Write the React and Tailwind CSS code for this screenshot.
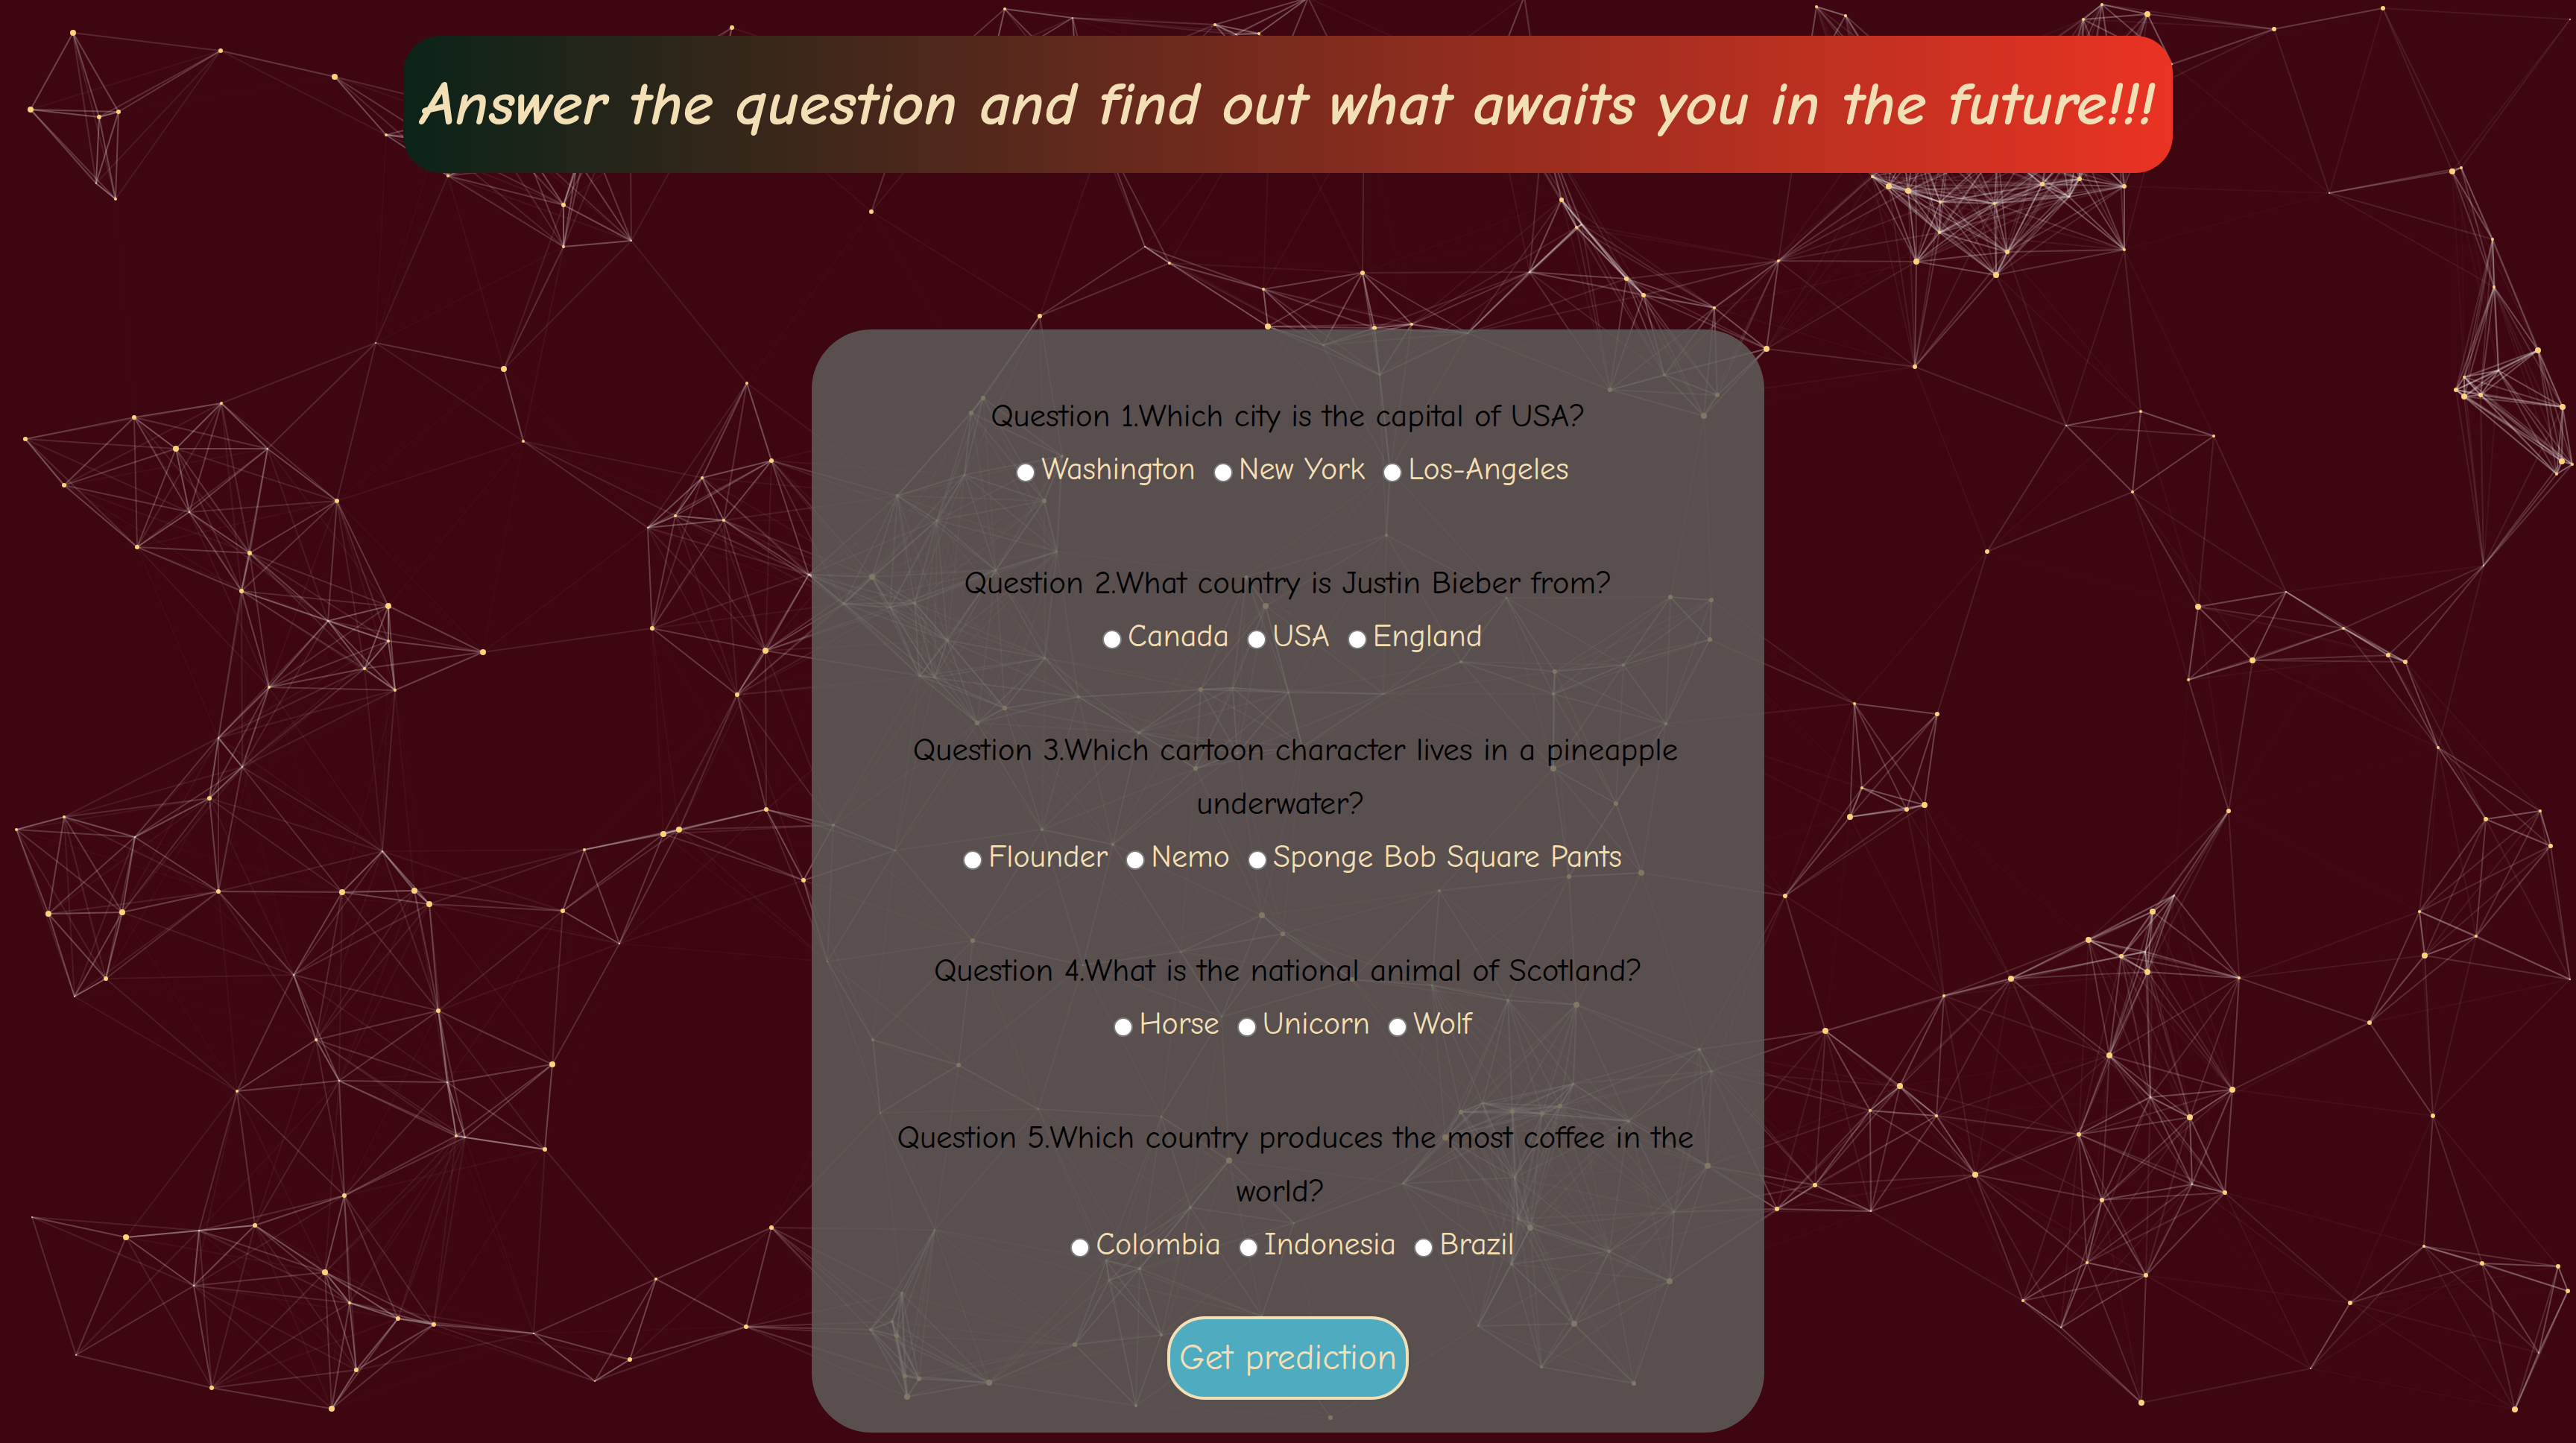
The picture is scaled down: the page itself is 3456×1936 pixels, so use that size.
import React from "react";

const QUESTIONS = [
  { lines: ["Question 1.Which city is the capital of USA?"], answers: ["Washington", "New York", "Los-Angeles"] },
  { lines: ["Question 2.What country is Justin Bieber from?"], answers: ["Canada", "USA", "England"] },
  {
    lines: ["Question 3.Which cartoon character lives in a pineapple", "underwater?"],
    answers: ["Flounder", "Nemo", "Sponge Bob Square Pants"],
  },
  { lines: ["Question 4.What is the national animal of Scotland?"], answers: ["Horse", "Unicorn", "Wolf"] },
  {
    lines: ["Question 5.Which country produces the most coffee in the", "world?"],
    answers: ["Colombia", "Indonesia", "Brazil"],
  },
];

/* Particle field: [x, y, radius]; neighbours closer than LINK_DISTANCE are joined. */
const LINK_DISTANCE = 300;
const PARTICLES = [
  [98,44,4],[296,68,3],[449,103,4],[41,147,4],[133,157,3],[159,150,3],[129,246,1],[155,267,2],[518,181,2],[601,236,2],
  [756,275,3],[756,331,2],[847,323,1],[982,37,3],[504,460,1],[676,495,4],[702,592,2],[297,541,2],[180,560,3],[34,589,3],
  [236,602,4],[359,602,1],[86,651,3],[254,687,1],[452,672,3],[184,734,3],[335,742,3],[324,793,3],[521,813,4],[440,833,1],
  [521,860,2],[489,897,2],[648,875,4],[1002,514,2],[1035,618,3],[942,641,2],[906,692,2],[971,698,2],[869,708,1],[1085,771,1],
  [875,843,3],[1027,873,4],
  [361,922,2],[530,926,2],[989,932,3],[293,990,1],[325,1029,1],[281,1071,3],[86,1096,2],[22,1113,2],[181,1123,1],[65,1226,4],
  [164,1224,4],[293,1196,3],[142,1313,3],[100,1337,1],[513,1142,1],[459,1197,4],[556,1195,4],[576,1213,4],[394,1308,1],
  [424,1395,2],[588,1356,3],[455,1450,1],[600,1452,1],[318,1464,2],[741,1428,4],[612,1524,2],[624,1526,1],[731,1542,3],
  [462,1604,3],[784,1140,2],[755,1222,3],[831,1266,1],[890,1119,4],[911,1113,4],[1028,1086,3],[1078,1181,3],[43,1633,1],
  [169,1660,4],[267,1651,1],[342,1644,3],[260,1725,1],[436,1707,4],[469,1748,2],[534,1769,3],[582,1777,3],[102,1818,1],
  [284,1862,3],[478,1838,3],[445,1890,4],[716,1789,1],[798,1853,1],[845,1824,3],[880,1716,2],[1001,1780,3],[1035,1647,3],
  [1348,12,2],[1439,24,1],[1630,33,2],[1689,45,2],[1658,46,1],[1169,284,3],[1536,331,1],[1569,353,2],[1395,424,3],
  [1695,388,2],[1701,438,4],[1755,-3,1],[2045,-5,1],
  [1828,366,3],[1844,440,3],[1894,435,2],[2095,268,3],[2122,301,1],[2115,305,2],[2052,365,1],[2182,374,3],[2205,396,3],
  [2300,413,2],[2386,350,2],[2571,351,4],[2678,369,4],[2693,338,3],[2850,335,2],[2602,312,2],[2603,271,2],[2676,273,2],
  [2776,264,1],[2740,247,3],[2790,240,3],[2850,250,3],[2560,256,4],[2534,250,4],[2512,237,2],[2437,9,2],[2476,21,2],
  [2820,6,2],[2881,19,4],[2795,26,2],[2914,86,1],[1969,447,1],
  [3051,39,3],[3197,11,3],[3448,26,1],[3125,259,1],[3290,230,4],[3302,225,2],[3344,321,2],[3346,385,2],[3405,470,4],
  [3352,497,1],[3306,506,2],[3295,523,3],[3306,532,4],[3328,530,3],[3438,546,4],[3437,619,4],[3451,623,2],[3430,636,2],
  [3332,759,1],[2370,468,4],[2569,492,3],[2772,571,1],[2872,552,2],[2970,585,2],[2861,660,2],[2666,740,3],[2949,814,4],
  [3067,794,1],[3144,843,2],[3022,886,4],[3204,879,3],[3227,888,3],[2936,912,2],
  [2488,944,2],[2599,958,3],[2498,1057,2],[2482,1096,4],[2558,1086,3],[2582,1080,4],[2395,1202,3],[2990,1088,3],
  [3271,1003,2],[3335,1099,3],[3408,1088,2],[3422,1135,3],[3246,1223,2],[3322,1256,2],[3253,1282,4],[3448,1314,1],
  [3179,1372,3],[3264,1497,3],[2917,1201,1],[2888,1223,4],[2802,1261,4],[2846,1283,3],[2878,1277,1],[2881,1304,4],
  [2698,1313,4],[3004,1312,2],[2608,1336,2],[2449,1383,4],[2830,1416,4],[2549,1457,4],[2509,1490,2],[2598,1497,2],
  [2885,1472,1],[2995,1462,4],[2938,1499,4],[2789,1522,3],[2650,1576,4],[2941,1589,1],[2985,1600,3],[2820,1610,3],
  [2435,1590,3],[2384,1622,3],[2510,1625,1],[2800,1694,2],[2879,1711,3],[2714,1745,2],[2765,1781,1],[2873,1882,4],
  [3100,1836,1],[3153,1748,3],[3252,1672,2],[3330,1695,3],[3432,1699,3],[3445,1732,3],[3406,1815,1],[3374,1891,4],
  [1775,463,1],[1851,503,1],[1319,534,3],[1303,554,3],[1294,637,1],[1425,612,2],[1204,665,2],[1401,672,3],[1257,698,1],
  [1418,740,1],[1336,765,1],[1170,774,4],[1132,810,2],[1194,815,1],[1227,809,2],[1271,859,2],[1234,907,1],[1254,909,1],
  [1402,883,1],[1447,935,2],[1348,950,3],[1311,970,3],[1528,983,2],[1611,925,3],[1654,923,1],[1729,929,1],[1856,931,1],
  [1698,813,4],[1672,774,2],[1860,718,2],[1865,631,1],[2021,802,1],[1960,888,2],[2086,901,3],[2084,931,2],[2178,892,2],
  [2241,801,3],[2296,805,3],[2294,858,3],[2235,971,2],[2084,1031,4],[2168,1078,3],[1604,1031,3],[1747,1002,1],
  [1660,1011,1],[2202,1171,4],[2105,1176,3],[1398,1113,2],[1493,1133,2],[1201,1141,1],[1118,1107,2],[2160,523,3],
  [2233,503,2],[2304,530,3],[2286,558,4],
  [1931,1195,2],[1693,1228,4],[1721,1253,3],[1584,1277,1],[1305,1262,3],[1110,1290,1],[1814,1314,3],[1921,1322,1],
  [1453,1295,1],[1639,1364,1],[2023,1342,2],[2115,1348,4],[1171,1395,2],[1286,1429,3],[1181,1493,1],[1393,1488,1],
  [1558,1498,1],[1649,1557,4],[2280,1408,2],[2296,1437,1],[2111,1454,1],[2093,1484,3],[1989,1480,1],[1960,1492,3],
  [2029,1491,3],[2069,1494,3],[2185,1504,2],[1939,1526,4],[1882,1588,1],[2032,1580,1],[2291,1564,4],[1597,1620,2],
  [1736,1641,1],[2037,1635,2],[2053,1647,4],[2246,1626,1],[2159,1679,2],[2028,1696,2],[2240,1719,4],[1983,1779,1],
  [2112,1776,4],[2068,1834,2],[2192,1856,3],[1785,1902,3],[1693,1766,1],[1524,1886,2],[1442,1804,3],[1558,1791,2],
  [1484,1691,1],[1529,1702,2],[1488,1718,1],[1254,1650,1],[1210,1735,2],[1197,1773,2],[1168,1784,2],[1203,1792,3],
  [1214,1846,3],[1233,1850,3],[1217,1874,4],[1327,1855,4],
  [585,190,2],[640,150,2],[700,190,3],[790,180,2],[775,215,1],[845,120,2],[965,110,2],[1225,120,2],[1330,90,2],[1445,110,2],
  [1480,180,2],[1705,120,2],[1830,150,2],[2000,110,2],[2070,170,2],[2420,120,2],[2545,130,2],[2570,180,2],
  [2620,150,2],[2680,200,2],[2755,150,2],[2790,190,2],[2840,140,2],
];

const LINKS = PARTICLES.flatMap(([x1, y1], i) =>
  PARTICLES.slice(i + 1).flatMap(([x2, y2]) => {
    const distance = Math.hypot(x1 - x2, y1 - y2);
    return distance < LINK_DISTANCE ? [{ x1, y1, x2, y2, opacity: 0.4 * (1 - distance / LINK_DISTANCE) }] : [];
  })
);

function ParticleField() {
  return (
    <svg className="absolute inset-0 size-full" aria-hidden="true">
      <g stroke="#ffffff" strokeWidth="2">
        {LINKS.map(({ opacity, ...ends }, i) => (
          <line key={i} {...ends} strokeOpacity={opacity.toFixed(3)} />
        ))}
      </g>
      <g fill="#fdd27c">
        {PARTICLES.map(([cx, cy, r], i) => (
          <circle key={i} cx={cx} cy={cy} r={r} />
        ))}
      </g>
    </svg>
  );
}

function Question({ number, lines, answers }) {
  return (
    <fieldset className="w-full text-center">
      <legend className="w-full text-black">
        {lines.length === 1 ? (
          lines[0]
        ) : (
          <>
            <span className="block pl-5">{lines[0]}</span>
            <span className="block pr-5">{lines[1]}</span>
          </>
        )}
      </legend>
      <div className="flex justify-center gap-6 pl-3 text-[42px]">
        {answers.map((answer) => (
          <label key={answer} className="flex items-center gap-2 text-[#f3dfb5]">
            <input
              type="radio"
              name={`question-${number}`}
              value={answer}
              className="mt-2 size-[26px] shrink-0 appearance-none rounded-full border-2 border-[#7b7c7b] bg-white checked:border-[6px] checked:border-[#4fabc0]"
            />
            {answer}
          </label>
        ))}
      </div>
    </fieldset>
  );
}

export default function App() {
  return (
    <div className="relative min-h-screen overflow-hidden bg-[#3e0610] font-['Comic_Neue','Roboto_Condensed','Liberation_Sans',sans-serif]">
      <ParticleField />
      <main className="relative flex flex-col items-center pt-12 pb-3">
        <h1 className="rounded-[50px] bg-linear-to-r/srgb from-[#0b2318] to-[#ea3323] px-6 pt-4 pb-4 text-[83px] leading-[152px] font-bold whitespace-nowrap text-[#f3dfb5] italic">
          Answer the question and find out what awaits you in the future!!!
        </h1>
        <form
          className="mt-[210px] flex w-[37%] flex-col items-center rounded-[80px] bg-[#60625ecc] pt-20 pb-11 text-[43px] leading-[72px]"
          onSubmit={(event) => event.preventDefault()}
        >
          <div className="flex w-full flex-col gap-20">
            {QUESTIONS.map((question, i) => (
              <Question key={i} number={i + 1} {...question} />
            ))}
          </div>
          <button
            type="submit"
            className="mt-15 rounded-[50px] border-4 border-[#f3dfb5] bg-[#4fabc0] px-3 py-4 text-[48px] text-[#f3dfb5]"
          >
            Get prediction
          </button>
        </form>
      </main>
    </div>
  );
}
